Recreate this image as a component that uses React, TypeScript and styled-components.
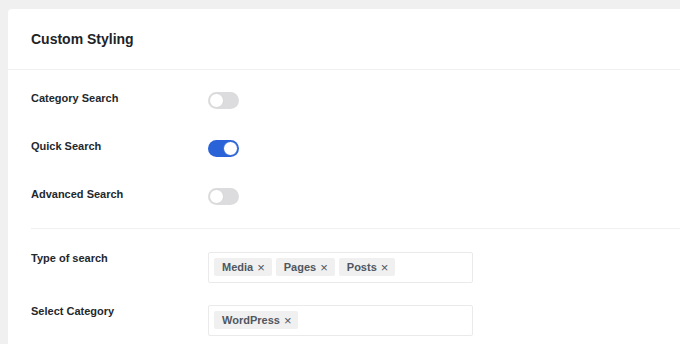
import styled, { createGlobalStyle } from "styled-components";

const GlobalStyle = createGlobalStyle`
  html, body {
    margin: 0;
    background: #f0f0f0;
    overflow: hidden;
  }
  body {
    font-family: "Liberation Sans", Arial, sans-serif;
    color: #1d2327;
  }
`;

const toggles = [
  { label: "Category Search", on: false },
  { label: "Quick Search", on: true },
  { label: "Advanced Search", on: false },
];

const fields = [
  { label: "Type of search", tags: ["Media", "Pages", "Posts"] },
  { label: "Select Category", tags: ["WordPress"] },
];

const App = () => {
  return (
    <>
      <GlobalStyle />
      <Page>
        <Card>
          <Header>
            <Title>Custom Styling</Title>
          </Header>
          <Body>
            <ToggleList>
              {toggles.map((t) => (
                <Row key={t.label}>
                  <ToggleLabel>{t.label}</ToggleLabel>
                  <Switch $on={t.on}>
                    <Knob $on={t.on} />
                  </Switch>
                </Row>
              ))}
            </ToggleList>
            <Divider />
            <FieldList>
              {fields.map((f) => (
                <FieldRow key={f.label}>
                  <Label>{f.label}</Label>
                  <TagBox>
                    {f.tags.map((tag) => (
                      <Tag key={tag}>
                        {tag}
                        <Remove>×</Remove>
                      </Tag>
                    ))}
                  </TagBox>
                </FieldRow>
              ))}
            </FieldList>
          </Body>
        </Card>
      </Page>
    </>
  );
};
export default App;

const Page = styled.div`
  padding: 9px 0 0 8px;
  height: 344px;
  box-sizing: border-box;
`;

const Card = styled.div`
  background: #fff;
  border-radius: 4px 0 0 0;
  margin-right: -20px;
  height: 100%;
`;

const Header = styled.div`
  height: 60px;
  display: flex;
  align-items: center;
  padding-left: 23px;
  border-bottom: 1px solid #f0f0f0;
`;

const Title = styled.h2`
  margin: 0;
  font-size: 14px;
  font-weight: 700;
  color: #1d2327;
`;

const Body = styled.div`
  padding: 0 0 0 23px;
`;

const ToggleList = styled.div`
  padding: 6px 0 8px;
`;

const Row = styled.div`
  display: flex;
  align-items: center;
  height: 48px;
`;

const Label = styled.div`
  width: 177px;
  font-size: 11px;
  font-weight: 700;
  line-height: 12px;
  color: #23282d;
`;

const ToggleLabel = styled(Label)`
  margin-bottom: 4px;
`;

const Switch = styled.div<{ $on: boolean }>`
  width: 31px;
  height: 17px;
  border-radius: 9px;
  box-sizing: border-box;
  background: ${(p) => (p.$on ? "#2a63d8" : "#dcdcde")};
  display: flex;
  align-items: center;
  justify-content: ${(p) => (p.$on ? "flex-end" : "flex-start")};
  padding: 0 1px;
`;

const Knob = styled.div<{ $on: boolean }>`
  width: 15px;
  height: 15px;
  border-radius: 50%;
  background: #fff;
  box-sizing: border-box;
  border: 1px solid ${(p) => (p.$on ? "#2a63d8" : "#d6d6d8")};
`;

const Divider = styled.div`
  height: 1px;
  background: #f0f0f0;
`;

const FieldList = styled.div`
  display: flex;
  flex-direction: column;
  gap: 22px;
  padding-top: 23px;
`;

const FieldRow = styled.div`
  display: flex;
  align-items: flex-start;
`;

const TagBox = styled.div`
  width: 265px;
  height: 31px;
  box-sizing: border-box;
  border: 1px solid #eaeaea;
  border-radius: 2px;
  padding: 5px;
  display: flex;
  gap: 4px;
`;

const Tag = styled.span`
  display: flex;
  align-items: center;
  gap: 4px;
  height: 18px;
  padding: 0 7px 0 8px;
  background: #f0f0f1;
  border-radius: 2px;
  font-size: 11px;
  font-weight: 700;
  color: #50575e;
`;

const Remove = styled.span`
  font-weight: 400;
  font-size: 13px;
  color: #50575e;
`;
